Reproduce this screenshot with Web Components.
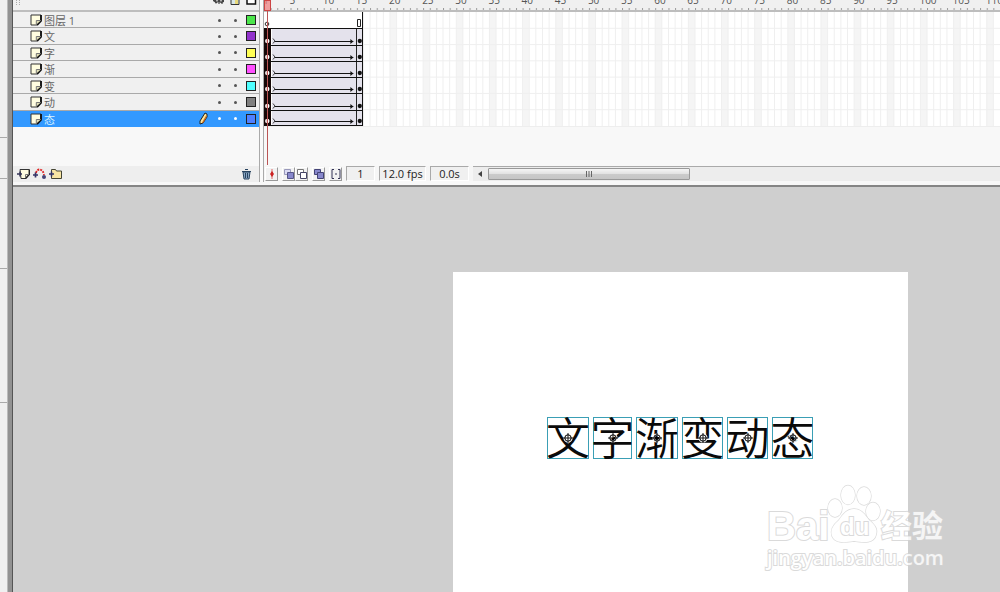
<!DOCTYPE html>
<html lang="zh-CN">
<head>
<meta charset="utf-8">
<title>文字渐变动态</title>
<style>
html, body { margin: 0; height: 100%; }
body { font: 11px/16px "Open Sans", "Noto Sans CJK SC", sans-serif; color: #222; background: #cfcfcf; overflow: hidden; }
</style>
</head>
<body>
<flash-editor></flash-editor>
<script>
const define = (name, html, setup) => {
  const tpl = document.createElement('template');
  tpl.innerHTML = html;
  customElements.define(name, class extends HTMLElement {
    constructor() { super(); this.attachShadow({ mode: 'open' }); }
    connectedCallback() {
      if (this.shadowRoot.childNodes.length) return;
      this.shadowRoot.append(tpl.content.cloneNode(true));
      if (setup) setup(this.shadowRoot, this);
    }
  });
};

/* One glyph of stage text with its selection frame and registration mark */
define('stage-glyph', `
<style>
:host { display: grid; place-items: center; position: relative; box-sizing: border-box; width: 41px; height: 42px; padding-bottom: 4px; border: 1px solid #3a9fb5; font: 350 44px/36px "Noto Sans CJK SC", sans-serif; color: #0a0a0a; }
:host([narrow]) { width: 39px; }
:host([wide]) { width: 42px; }
span { justify-self: center; margin: 0 -4px; }
svg { position: absolute; left: 50%; top: 50%; width: 10px; height: 10px; margin: -5px; }
</style>
<span><slot></slot></span>
<svg viewBox="0 0 10 10" fill="none"><circle cx="5" cy="5" r="3.4" stroke="#fff" stroke-width="2.4"/><circle cx="5" cy="5" r="3.2" stroke="#000"/><path d="M5 0v10M0 5h10" stroke="#000" stroke-width=".9"/></svg>`);

/* Row of the layer list */
define('layer-row', `
<style>
:host { display: grid; grid-template-columns: 29px 1fr 16px 16px 16px 16px; align-items: center; justify-items: center; box-sizing: border-box; min-height: 0; border-bottom: 1px solid #a9a9a9; background: #f0f0f0; color: #666; line-height: 14px; }
:host([active]) { background: #3399ff; border-color: #3399ff; color: #d9f2ff; }
.page { justify-self: end; width: 12px; height: 12px; }
.name { justify-self: start; padding-left: 2px; padding-top: 2px; font-size: 11px; height: 14px; }
i { width: 3px; height: 3px; border-radius: 2px; background: #555; }
:host([active]) i { background: #fff; }
b { width: 8px; height: 8px; border: 1px solid #222; background: var(--swatch); }
.pen { width: 9px; height: 13px; visibility: hidden; }
:host([active]) .pen { visibility: visible; }
</style>
<svg class="page" viewBox="0 0 12 12"><path d="M1 1h10v6l-4 4H1z" fill="#fffde0" stroke="#333"/><path d="M11 1v6l-4 4" fill="none" stroke="#111" stroke-width="1.8"/><path d="M6.300 10.500V6.500h4.500" fill="#e0deb4" stroke="#777"/></svg>
<span class="name"><slot></slot></span>
<svg class="pen" viewBox="0 0 9 13"><path d="M6 1l2 1v3L4 11l-3 1V9z" fill="#ffe69a" stroke="#222"/><path d="M7.500 4L3.500 11" stroke="#c66a20" stroke-width="1.300"/></svg>
<i></i><i></i><b></b>`);

/* Small toolbar button with an icon slot */
define('tool-button', `
<style>
:host { display: block; }
button { display: grid; place-items: center; box-sizing: border-box; width: 13px; height: 14px; padding: 0; border: 0; background: none; }
:host([raised]) button { border: 1px solid #fff; border-right-color: #999; border-bottom-color: #999; background: #f2f2f2; }
</style>
<button type="button"><slot></slot></button>`, (root, host) => {
  root.querySelector('button').setAttribute('aria-label', host.getAttribute('label'));
});

define('layer-panel', `
<style>
:host { display: flex; flex-direction: column; background: #f8f8f8; min-width: 0; }
header { box-sizing: border-box; height: 12px; display: grid; grid-template-columns: 1fr 16px 16px 16px; justify-items: center; background: #f0f0f0; border-bottom: 2px solid #bdbdbd; overflow: hidden; }
header svg { width: 12px; height: 10px; }
header .grip { justify-self: start; margin-left: 2px; width: 6px; }
.rows { display: grid; grid-template-rows: repeat(7, minmax(0, 1fr)); height: 115px; }
.void { height: 39px; }
footer { display: flex; gap: 3px; align-items: center; box-sizing: border-box; height: 16px; padding: 0 6px 0 4px; background: #eee; }
footer :last-child { margin-left: auto; }
footer svg { width: 13px; height: 12px; }
</style>
<header>
<svg class="grip" viewBox="0 0 6 10"><path d="M1.500 0v6M4.500 0v6" stroke="#aaa" stroke-dasharray="1 1"/></svg>
<svg viewBox="0 0 12 10"><path d="M0 0h11v2l-3 1-2-1-3 1-3-2z" fill="#444"/><path d="M3 2v1.500M6 2v2M9 2v2" stroke="#222"/><path d="M3 .8h2M7 .8h2" stroke="#ddd"/></svg>
<svg viewBox="0 0 12 10"><path d="M2-1v5.500h8V-1" fill="#d7e6e8" stroke="#333"/><path d="M6 0h3v4H6z" fill="#e7d879"/></svg>
<svg viewBox="0 0 12 10"><path d="M2-4h8.500v8H2z" fill="#fff" stroke="#111" stroke-width="1.500"/></svg>
</header>
<div class="rows" role="list">
<layer-row role="listitem" style="--swatch:#4be54b">图层 1</layer-row>
<layer-row role="listitem" style="--swatch:#9233cc">文</layer-row>
<layer-row role="listitem" style="--swatch:#ffff55">字</layer-row>
<layer-row role="listitem" style="--swatch:#ff4fff">渐</layer-row>
<layer-row role="listitem" style="--swatch:#4fffff">变</layer-row>
<layer-row role="listitem" style="--swatch:#808080">动</layer-row>
<layer-row role="listitem" active style="--swatch:#4f80ff">态</layer-row>
</div>
<div class="void"></div>
<footer>
<tool-button label="插入图层"><svg viewBox="0 0 13 12"><path d="M3 1.500h9.500V6L9 10.500H4z" fill="#fffde0" stroke="#333"/><path d="M12.300 2v4.500L8.500 10.500" fill="none" stroke="#222" stroke-width="1.500"/><path d="M8.500 10V6.500h3.500" fill="none" stroke="#777"/><path d="M0 6h5M3 3.500v5" stroke="#335" stroke-width="1.500"/></svg></tool-button>
<tool-button label="添加引导层"><svg viewBox="0 0 13 12"><path d="M3 5c1-5 7-5 8 2" fill="none" stroke="#d22" stroke-width="1.800" stroke-dasharray="2 1"/><path d="M0 7h5M2.500 4.500v5" stroke="#336" stroke-width="1.700"/><circle cx="11" cy="9" r="2" fill="#447"/></svg></tool-button>
<tool-button label="插入图层文件夹"><svg viewBox="0 0 13 12"><path d="M2.500 1.500h4l1 1.500h5v7.500h-10z" fill="#f8e5a4" stroke="#443"/><path d="M0 6h5M2.500 3.500v5" stroke="#336" stroke-width="1.500"/></svg></tool-button>
<tool-button label="删除图层"><svg viewBox="0 0 13 12"><path d="M3 4l1 7h5l1-7z" fill="#8ba8c5" stroke="#28435f"/><path d="M2 3.500h9M5 1.500h3M5.500 5v5M7.500 5v5" stroke="#28435f"/></svg></tool-button>
</footer>`);

/* Tween span: first keyframe, arrow, closing keyframe */
define('tween-span', `
<style>
:host { display: grid; grid-template-columns: 1fr 13fr 1fr; min-width: 0; min-height: 0; box-sizing: border-box; border-top: 1px solid #111; border-right: 1px solid #111; background: #e4e2ec; }
div { position: relative; min-width: 0; }
.first { background: #160808; border-right: 1px solid #fff; margin-right: -1px; }
.last { border-left: 1px solid #222; }
svg { position: absolute; bottom: 0; left: 0; width: 100%; height: 8px; }
</style>
<div class="first"><svg viewBox="0 0 6 8"><circle cx="3" cy="4" r="2.200" fill="#fff"/><path d="M3 2v4" stroke="#a33"/></svg></div>
<div><svg viewBox="0 0 86 8" preserveAspectRatio="none" fill="none" stroke="#111"><path d="M2 1.500l2 2.500-2 2.500" stroke-width=".8"/><path d="M4 4.500h79"/><path d="M80 2l3 2.500-3 2.500z" fill="#111" stroke="none"/></svg></div>
<div class="last"><svg viewBox="0 0 6 8"><circle cx="3" cy="4" r="2.300" fill="#111"/></svg></div>`);

define('static-span', `
<style>
:host { display: flex; justify-content: space-between; align-items: end; min-width: 0; min-height: 0; box-sizing: border-box; border-right: 1px solid #111; background: #fff; }
svg { width: 6px; height: 9px; }
</style>
<svg viewBox="0 0 6 9"><circle cx="3" cy="5" r="1.800" fill="#fff" stroke="#333"/></svg>
<svg viewBox="0 0 6 9"><path d="M1.500 .5h3v7h-3z" fill="#fff" stroke="#222"/></svg>`);

define('frame-panel', `
<style>
:host { display: flex; flex-direction: column; position: relative; min-width: 0; background: #f8f8f8; overflow: hidden; }
.ruler { position: relative; display: grid; grid-template-columns: repeat(111, minmax(0, 1fr)); box-sizing: border-box; height: 12px; background: #f0f0f0; border-bottom: 2px solid #bdbdbd; overflow: hidden; color: #555; }
.ruler span { grid-row: 1; height: 14px; margin-top: -7px; margin-left: -1px; line-height: 14px; font-size: 10px; white-space: nowrap; }
.ruler svg { position: absolute; inset: 0; width: 100%; height: 100%; }
.rows { position: relative; height: 115px; display: grid; grid-template: repeat(7, minmax(0, 1fr)) / repeat(111, minmax(0, 1fr)); background: #fff; border-bottom: 1px solid #eee; box-sizing: border-box; }
.rows svg { position: absolute; inset: 0; width: 100%; height: 100%; }
.rows > :not(svg) { grid-column: 1 / 16; position: relative; }
.rows > :last-child { border-bottom: 1px solid #111; }
.head { position: absolute; top: 0; left: 0; width: 5px; height: 9px; border: 1px solid #c44; background: rgba(240, 120, 120, .7); }
.head::after { content: ""; position: absolute; left: 2px; top: 10px; width: 1px; height: 154px; background: #b55; }
.void { height: 39px; }
footer { display: flex; align-items: center; height: 15px; padding-left: 1px; background: #f6f6f6; }
.gap { margin-left: 4px; }
footer svg { width: 10px; height: 10px; }
output { box-sizing: border-box; height: 15px; line-height: 14px; margin-left: 4px; text-align: center; border: 1px solid #a9a9a9; border-right-color: #fff; border-bottom-color: #fff; background: #f0f0f0; color: #222; white-space: nowrap; }
.frame { width: 29px; } .rate { width: 47px; } .time { width: 39px; }
.scroll { flex: 1; display: flex; align-items: center; box-sizing: border-box; height: 15px; margin-left: 4px; border-top: 1px solid #aaa; background: #ededed; min-width: 0; }
.scroll tool-button { width: 15px; }
.thumb { box-sizing: border-box; width: 202px; height: 12px; display: grid; place-items: center; border: 1px solid #999; border-radius: 1px; background: linear-gradient(#f5f5f5, #e3e3e3 45%, #cbcbcb 50%, #c5c5c5); }
.thumb svg { width: 8px; height: 6px; }
</style>
<div class="ruler"><svg><defs><pattern id="ticks" width="0.9009%" height="100%" patternUnits="userSpaceOnUse"><path d="M.5 8v2" stroke="#999"/></pattern></defs><rect width="100%" height="100%" fill="url(#ticks)"/></svg></div>
<div class="rows"><svg class="cells" viewBox="0 0 111 7" preserveAspectRatio="none"></svg>
<static-span></static-span><tween-span></tween-span><tween-span></tween-span><tween-span></tween-span><tween-span></tween-span><tween-span></tween-span><tween-span></tween-span></div>
<div class="void"></div>
<footer>
<tool-button raised label="滚动到播放头"><svg viewBox="0 0 10 10"><path d="M5 0v10" stroke="#d66"/><path d="M5 2l2 3-2 3-2-3z" fill="#c22"/></svg></tool-button>
<tool-button raised class="gap" label="绘图纸外观"><svg viewBox="0 0 10 10"><path d="M.5 .5h6v5h-6z" fill="#dcdcf4" stroke="#99b"/><path d="M3.500 3.500h6v6h-6z" fill="#8888cc" stroke="#558"/></svg></tool-button>
<tool-button raised label="绘图纸外观轮廓"><svg viewBox="0 0 10 10" fill="#fff" stroke="#777"><path d="M.5 .5h6v5h-6z"/><path d="M3.500 3.500h6v6h-6z" stroke="#446"/></svg></tool-button>
<tool-button raised class="gap" label="编辑多个帧"><svg viewBox="0 0 10 10" fill="#8888cc" stroke="#447"><path d="M.5 .5h6v5h-6z"/><path d="M3.500 3.500h6v6h-6z"/></svg></tool-button>
<tool-button raised class="gap" label="修改绘图纸标记"><svg viewBox="0 0 10 10" fill="none" stroke="#335"><path d="M3 .5H1v9h2M7 .5h2v9H7M4 5h2"/></svg></tool-button>
<output class="frame">1</output><output class="rate">12.0 fps</output><output class="time">0.0s</output>
<div class="scroll"><tool-button label="向左滚动"><svg viewBox="0 0 10 10"><path d="M7 2v6L3 5z" fill="#444"/></svg></tool-button><div class="thumb"><svg viewBox="0 0 8 6"><path d="M1.500 0v6M4 0v6M6.500 0v6" stroke="#666"/></svg></div></div>
</footer>
<div class="head"></div>`, root => {
  const ruler = root.querySelector('.ruler');
  for (const n of [1, ...Array.from({ length: 22 }, (_, i) => 5 * (i + 1))]) {
    const label = document.createElement('span');
    label.textContent = n;
    label.style.gridColumn = n;
    ruler.append(label);
  }
  let cells = '';
  for (let n = 5; n <= 110; n += 5) cells += `<rect x="${n - 1}" width="1" height="7" fill="#f5f5f5"/>`;
  let lines = '';
  for (let n = 1; n < 111; n++) lines += `M${n} 0v7`;
  for (let n = 1; n < 7; n++) lines += `M0 ${n}h111`;
  root.querySelector('.cells').innerHTML = cells + `<path d="${lines}" stroke="#efefef" vector-effect="non-scaling-stroke"/>`;
});

define('baidu-mark', `
<style>
:host { display: block; width: 190px; color: #fff; opacity: .8; -webkit-text-stroke: 2px #d2d2d2; paint-order: stroke; white-space: nowrap; }
.top { display: flex; align-items: end; height: 60px; }
.bai { font: bold 40px/36px "Liberation Sans", sans-serif; width: 60px; }
.paw { position: relative; width: 54px; height: 60px; }
.paw svg { width: 54px; height: 60px; display: block; }
.du { position: absolute; left: 13px; top: 29px; font: bold 24px/28px "Liberation Sans", sans-serif; }
.jy { font: 700 31px/36px "Noto Sans CJK SC", sans-serif; height: 38px; }
.url { font: 600 20px/28px "Open Sans", sans-serif; }
</style>
<div class="top"><span class="bai">Bai</span>
<div class="paw"><svg viewBox="0 0 54 60" fill="#fff" stroke="#d2d2d2" stroke-width="1.300"><ellipse cx="8" cy="24" rx="7" ry="9"/><ellipse cx="21" cy="11" rx="7" ry="9.500"/><ellipse cx="37" cy="12" rx="7" ry="9"/><ellipse cx="46" cy="27.500" rx="7" ry="9"/><path d="M27 25c8 0 11 6 15 11 6 5 9 9 7 15-2 8-11 8-22 6-11 2-19 2-22-5-2-6 1-11 7-16 4-6 8-11 15-11z"/></svg><span class="du">du</span></div>
<span class="jy">经验</span></div>
<div class="url">jingyan.baidu.com</div>`);

define('stage-area', `
<style>
:host { position: relative; display: grid; grid-template-columns: 440fr 455fr 92fr; flex: 1; padding-top: 85px; background: #cfcfcf; min-height: 0; overflow: hidden; }
.paper { grid-column: 2; position: relative; background: #fff; }
.text { position: absolute; left: 94px; top: 145px; display: flex; gap: 4px; }
baidu-mark { position: absolute; left: 314px; top: 212px; }
</style>
<div class="paper">
<div class="text"><stage-glyph wide>文</stage-glyph><stage-glyph narrow>字</stage-glyph><stage-glyph wide>渐</stage-glyph><stage-glyph>变</stage-glyph><stage-glyph>动</stage-glyph><stage-glyph>态</stage-glyph></div>
<baidu-mark></baidu-mark>
</div>`);

define('flash-editor', `
<style>
:host { display: grid; grid-template-columns: 7px 6px 1fr; min-height: 100vh; }
.dock { display: grid; grid-template-rows: 138px 41px 90px 134px 1fr; background: #f0f0f0; }
.dock i { border-bottom: 1px solid #aaa; box-sizing: border-box; }
.dock i:last-child { border: 0; }
.split { background: #929292; border-right: 1px solid #555; border-left: 1px solid #bbb; box-sizing: border-box; }
main { display: flex; flex-direction: column; min-width: 0; }
.timeline { display: grid; grid-template-columns: 246px 5px 1fr; box-sizing: border-box; height: 187px; border-bottom: 2px solid #858585; background: #f8f8f8; }
.bar { border: 1px solid #aaa; border-width: 0 1px; background: #fafafa; height: 182px; box-sizing: border-box; }
</style>
<div class="dock"><i></i><i></i><i></i><i></i><i></i></div>
<div class="split"></div>
<main><div class="timeline"><layer-panel></layer-panel><div class="bar"></div><frame-panel></frame-panel></div>
<stage-area></stage-area></main>`);
</script>
</body>
</html>
